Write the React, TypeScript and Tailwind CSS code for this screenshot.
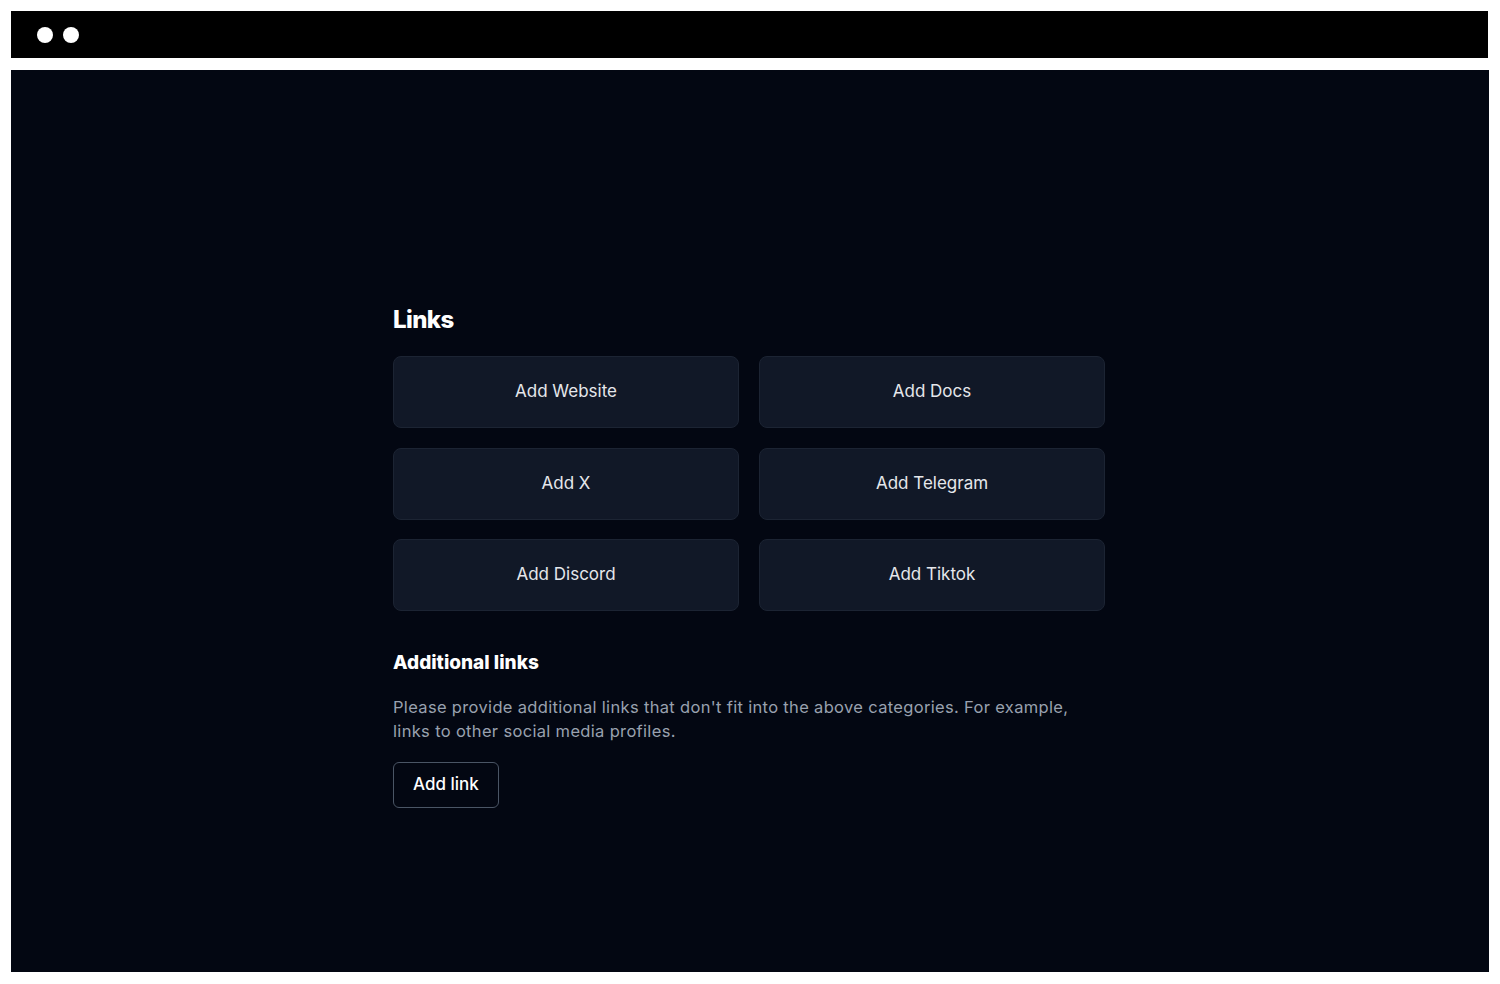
import React from 'react';

const links = ['Add Website', 'Add Docs', 'Add X', 'Add Telegram', 'Add Discord', 'Add Tiktok'];

export default function App() {
  return (
    <div
      className="w-full h-[984px] bg-white pt-[11px] px-[11px] flex flex-col"
      style={{ fontFamily: 'Inter, "Open Sans", sans-serif' }}
    >
      {/* window chrome */}
      <div className="h-[47px] bg-black flex items-center gap-[10px] pl-[26px] mr-[1px]">
        <span className="w-4 h-4 rounded-full bg-white" />
        <span className="w-4 h-4 rounded-full bg-white" />
      </div>

      <div className="mt-[12px] h-[902px] bg-[#030712] flex justify-center pt-[234px] pr-[2px]">
        <div className="w-[712px] flex flex-col">
          <h2 className="text-2xl leading-8 font-extrabold text-white tracking-tight">Links</h2>

          <div className="grid grid-cols-2 gap-x-5 gap-y-[19.5px] mt-5">
            {links.map((label, idx) => (
              <button
                key={idx}
                className="h-[72px] rounded-lg bg-[#111827] border border-[#1c2433] text-[17px] text-gray-200 flex items-center justify-center"
              >
                {label}
              </button>
            ))}
          </div>

          <h3 className="mt-[38px] text-[19px] leading-7 font-extrabold text-white">Additional links</h3>
          <p className="mt-[18px] text-[16.5px] leading-6 tracking-[0.02em] text-gray-400">
            Please provide additional links that don't fit into the above categories. For example, links to other
            social media profiles.
          </p>
          <div className="mt-[19px]">
            <button className="h-[46px] px-[19px] rounded-md border border-gray-600 text-white text-[17px] font-medium">
              Add link
            </button>
          </div>
        </div>
      </div>
    </div>
  );
}
